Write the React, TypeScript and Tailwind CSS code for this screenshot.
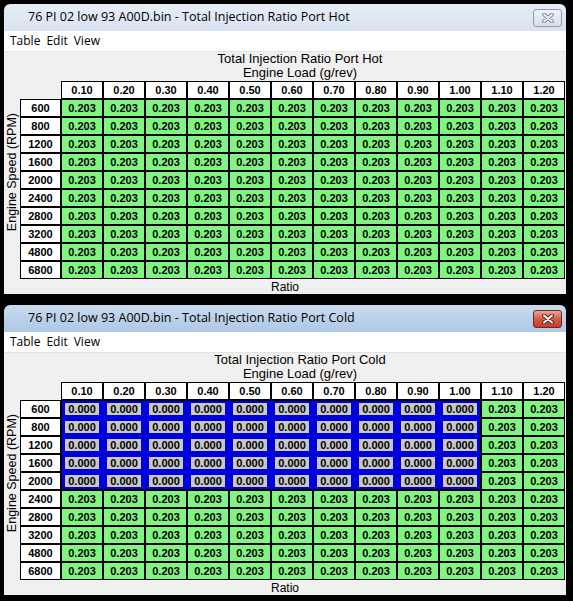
import React from 'react';

const ROWS = ['600', '800', '1200', '1600', '2000', '2400', '2800', '3200', '4800', '6800'];
const COLS = ['0.10', '0.20', '0.30', '0.40', '0.50', '0.60', '0.70', '0.80', '0.90', '1.00', '1.10', '1.20'];

interface Selection {
  rows: number;
  cols: number;
}

function CloseGlyph({ active }: { active: boolean }) {
  return (
    <svg width="14" height="10" viewBox="0 0 14 10">
      <path
        d="M3 1.5 L11 8.5 M11 1.5 L3 8.5"
        stroke={active ? '#5a1d12' : '#7d8796'}
        strokeWidth="3.8"
        strokeLinecap="round"
        fill="none"
      />
      <path
        d="M3 1.5 L11 8.5 M11 1.5 L3 8.5"
        stroke={active ? '#ffffff' : '#eef2f7'}
        strokeWidth="1.9"
        strokeLinecap="round"
        fill="none"
      />
    </svg>
  );
}

function MapGrid({ sel }: { sel: Selection | null }) {
  const inSel = (r: number, c: number) => sel !== null && r < sel.rows && c < sel.cols;

  return (
    <div className="grid grid-cols-[41px_repeat(12,42px)] auto-rows-[18px] font-['Liberation_Sans',Arial,sans-serif] text-[11px] font-bold text-black leading-none">
      <div />
      {COLS.map((c) => (
        <div key={c} className="border border-black bg-white flex items-center justify-center">
          {c}
        </div>
      ))}
      {ROWS.map((rpm, r) => (
        <React.Fragment key={rpm}>
          <div className="border border-black bg-white flex items-center justify-center">{rpm}</div>
          {COLS.map((col, c) => {
            if (!inSel(r, c)) {
              return (
                <div
                  key={col}
                  className="border border-black bg-[#82f482] flex items-center justify-center"
                >
                  0.203
                </div>
              );
            }
            const last = sel as Selection;
            return (
              <div
                key={col}
                className={`border bg-[#0000dc] px-[3px] py-[2px] ${
                  r === 0 ? 'border-t-black' : 'border-t-[#0000dc]'
                } ${r === last.rows - 1 ? 'border-b-black' : 'border-b-[#0000dc]'} ${
                  c === 0 ? 'border-l-black' : 'border-l-[#0000dc]'
                } ${c === last.cols - 1 ? 'border-r-black' : 'border-r-[#0000dc]'}`}
              >
                <div className="h-full w-full bg-[#c8c8c8] flex items-center justify-center">0.000</div>
              </div>
            );
          })}
        </React.Fragment>
      ))}
    </div>
  );
}

function MapWindow({
  title,
  active,
  sel,
}: {
  title: string;
  active: boolean;
  sel: Selection | null;
}) {
  return (
    <div className="ml-[4px] w-[562px] h-[290px] flex flex-col rounded-t-[6px] overflow-hidden">
      <div
        className={`h-[27px] shrink-0 flex items-center justify-between pl-[24px] pr-[4px] ${
          active
            ? 'bg-linear-to-b from-[#c9dbef] to-[#aec8e4]'
            : 'bg-linear-to-b from-[#e6edf6] to-[#d8e3f0]'
        }`}
      >
        <span className="font-['Open_Sans',sans-serif] text-[12.5px] text-black whitespace-nowrap">
          76 PI 02 low 93 A00D.bin - Total Injection Ratio Port {title}
        </span>
        <div
          className={`w-[29px] h-[18px] mt-[1px] rounded-[3px] border flex items-center justify-center ${
            active
              ? 'border-[#6e2a1e] bg-linear-to-b from-[#eaa596] via-[#d65a44] to-[#c43d27]'
              : 'border-[#8f9cb0] bg-linear-to-b from-[#eef2f8] to-[#d5dfeb]'
          }`}
        >
          <CloseGlyph active={active} />
        </div>
      </div>
      <div className="h-[20px] shrink-0 bg-white flex items-center pl-[6px] gap-[6px] font-['Open_Sans',sans-serif] text-[12px] text-black">
        <span>Table</span>
        <span>Edit</span>
        <span>View</span>
      </div>
      <div className="flex-1 bg-[#f0f0f0] border-t border-[#e3e3e3] flex flex-col font-['Liberation_Sans',Arial,sans-serif] text-[12px] text-black">
        <div className="pl-[30px] text-center leading-[14px] text-[13px]">
          <div>Total Injection Ratio Port {title}</div>
          <div>Engine Load (g/rev)</div>
        </div>
        <div className="flex mt-[1px]">
          <div className="w-[16px] flex items-center justify-center pb-[16px]">
            <span className="[writing-mode:vertical-rl] rotate-180 whitespace-nowrap leading-none text-[12.5px]">
              Engine Speed (RPM)
            </span>
          </div>
          <MapGrid sel={sel} />
        </div>
        <div className="text-center leading-[14px] mt-[1px]">Ratio</div>
      </div>
    </div>
  );
}

export default function App() {
  return (
    <div className="w-[573px] h-[601px] bg-black pt-[4px] flex flex-col gap-[11px] overflow-hidden">
      <MapWindow title="Hot" active={false} sel={null} />
      <MapWindow title="Cold" active sel={{ rows: 5, cols: 10 }} />
    </div>
  );
}
